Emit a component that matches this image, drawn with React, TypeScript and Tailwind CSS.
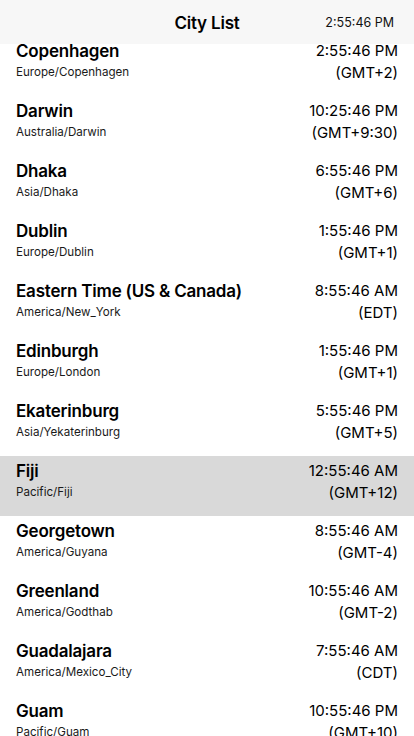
import React from "react";

const rows = [
  { name: "Copenhagen", zone: "Europe/Copenhagen", time: "2:55:46 PM", off: "(GMT+2)" },
  { name: "Darwin", zone: "Australia/Darwin", time: "10:25:46 PM", off: "(GMT+9:30)" },
  { name: "Dhaka", zone: "Asia/Dhaka", time: "6:55:46 PM", off: "(GMT+6)" },
  { name: "Dublin", zone: "Europe/Dublin", time: "1:55:46 PM", off: "(GMT+1)" },
  { name: "Eastern Time (US & Canada)", zone: "America/New_York", time: "8:55:46 AM", off: "(EDT)" },
  { name: "Edinburgh", zone: "Europe/London", time: "1:55:46 PM", off: "(GMT+1)" },
  { name: "Ekaterinburg", zone: "Asia/Yekaterinburg", time: "5:55:46 PM", off: "(GMT+5)" },
  { name: "Fiji", zone: "Pacific/Fiji", time: "12:55:46 AM", off: "(GMT+12)", selected: true },
  { name: "Georgetown", zone: "America/Guyana", time: "8:55:46 AM", off: "(GMT-4)" },
  { name: "Greenland", zone: "America/Godthab", time: "10:55:46 AM", off: "(GMT-2)" },
  { name: "Guadalajara", zone: "America/Mexico_City", time: "7:55:46 AM", off: "(CDT)" },
  { name: "Guam", zone: "Pacific/Guam", time: "10:55:46 PM", off: "(GMT+10)" },
];

export default function App() {
  return (
    <div
      className="relative w-[414px] h-[736px] overflow-hidden bg-white text-black"
      style={{ fontFamily: "Inter, 'Noto Sans', sans-serif" }}
    >
      <div className="absolute top-0 left-0 right-0 z-10 h-[44px] bg-[#f7f7f7] flex items-center justify-center pt-[3px]">
        <span className="text-[17px] font-semibold tracking-[-0.2px]">City List</span>
        <span className="absolute right-[20px] top-[15px] text-[12.5px] leading-[16px] text-[#111]">2:55:46 PM</span>
      </div>
      <div className="pt-[36px] flex flex-col">
        {rows.map((r) => (
          <div
            key={r.name}
            className={`h-[60px] px-4 pt-[4px] flex justify-between ${r.selected ? "bg-[#d9d9d9]" : ""}`}
          >
            <div className="flex flex-col">
              <span className="text-[17px] leading-[22px] font-semibold tracking-[-0.2px]">{r.name}</span>
              <span className="mt-[2px] text-[11.6px] leading-[16px] text-[#1a1a1a]">{r.zone}</span>
            </div>
            <div className="flex flex-col items-end">
              <span className="text-[15px] leading-[22px]">{r.time}</span>
              <span className="mt-[1px] text-[15px] leading-[20px]">{r.off}</span>
            </div>
          </div>
        ))}
      </div>
    </div>
  );
}
